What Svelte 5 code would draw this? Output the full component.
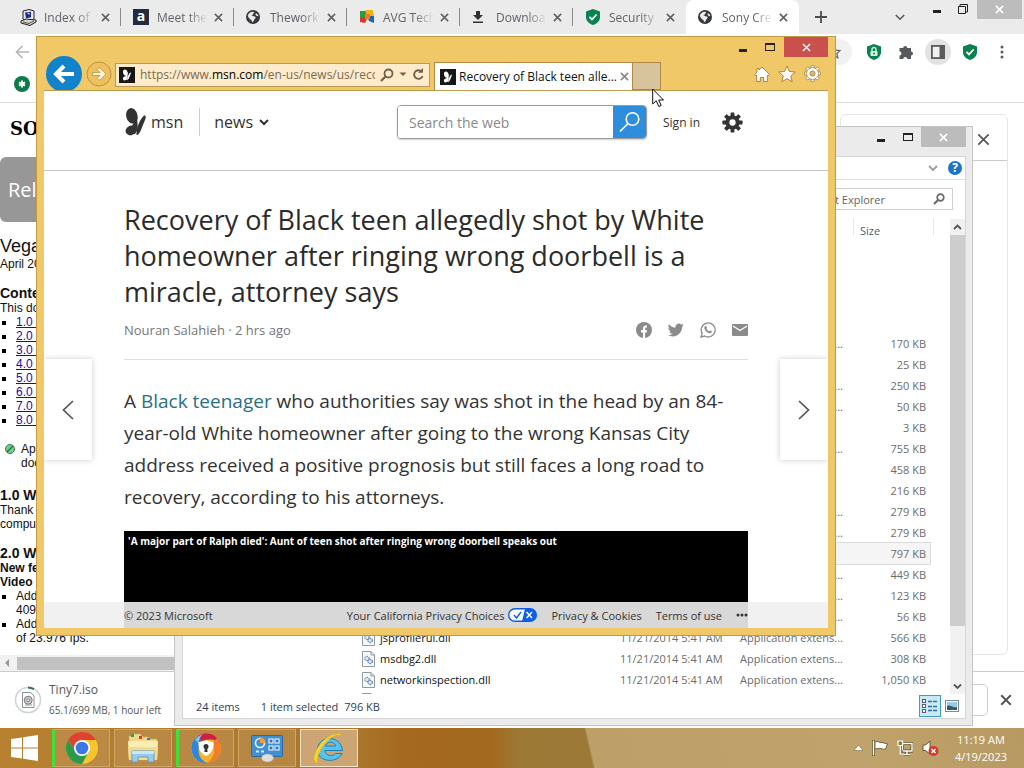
<script>
  const tabs = [
    { icon: 'server', label: 'Index of' },
    { icon: 'a', label: 'Meet the' },
    { icon: 'globe', label: 'Thework' },
    { icon: 'avg', label: 'AVG Tech' },
    { icon: 'download', label: 'Downloa' },
    { icon: 'shield', label: 'Security' },
    { icon: 'globe', label: 'Sony Cre', active: true }
  ];
  const chapters = ['1.0', '2.0', '3.0', '4.0', '5.0', '6.0', '7.0', '8.0'];
  const ext = 'Application extens...';
  const stamp = '11/21/2014 5:41 AM';
  const files = [
    { type: ext, size: '170 KB' },
    { size: '25 KB' },
    { type: ext, size: '250 KB' },
    { type: ext, size: '50 KB' },
    { size: '3 KB' },
    { type: ext, size: '755 KB' },
    { size: '458 KB' },
    { size: '216 KB' },
    { type: ext, size: '279 KB' },
    { type: ext, size: '279 KB' },
    { size: '797 KB', selected: true },
    { type: ext, size: '449 KB' },
    { type: ext, size: '123 KB' },
    { type: ext, size: '56 KB' },
    { name: 'jsprofilerui.dll', date: stamp, type: ext, size: '566 KB' },
    { name: 'msdbg2.dll', date: stamp, type: ext, size: '308 KB' },
    { name: 'networkinspection.dll', date: stamp, type: ext, size: '1,050 KB' }
  ];
</script>

{#snippet cross(s, w)}
  <svg width={s} height={s} viewBox="0 0 10 10" aria-hidden="true"><path d="M1 1 9 9M9 1 1 9" fill="none" stroke="currentColor" stroke-width={w} /></svg>
{/snippet}

{#snippet shield(s, lock)}
  <svg width={s} height={s} viewBox="0 0 16 16" aria-hidden="true">
    <path d="M8 0 15 2.400V8c0 4-3 6.800-7 8-4-1.200-7-4-7-8V2.400z" fill="#0a8150" />
    {#if lock}
      <rect x="4.500" y="7" width="7" height="5" rx="1" fill="#d8f3e4" /><path d="M6 7V5.500a2 2 0 0 1 4 0V7" fill="none" stroke="#d8f3e4" stroke-width="1.300" /><circle cx="8" cy="9.500" r="1" fill="#0a8150" />
    {:else}
      <path d="m4.500 7.800 2.500 2.600 4.600-4.900" fill="none" stroke="#fff" stroke-width="1.700" />
    {/if}
  </svg>
{/snippet}

{#snippet butterfly(color)}
  <g fill={color}>
    <ellipse cx="6.800" cy="7.800" rx="5.600" ry="7.800" transform="rotate(-12 6.800 7.800)" />
    <path d="M11.600 5c1.400 4 .4 7 .9 10.500.6 4-.2 8.500-3.200 11L6 20l2.500-5z" />
    <ellipse cx="5.800" cy="22.400" rx="5.400" ry="4.600" transform="rotate(-30 5.800 22.400)" />
    <path d="M11.500 27c-.3-7 3-15 7.500-19.500 2.300-.3 2.200 2 .6 5.500-2.300 5.200-4 11.500-6.600 13.800z" />
  </g>
{/snippet}

{#snippet msnIcon()}
  <svg width="16" height="16" viewBox="-9 -6 40 40" aria-hidden="true"><rect x="-9" y="-6" width="40" height="40" fill="#171717" />{@render butterfly('#fff')}</svg>
{/snippet}

{#snippet gear(s, color, hole, line)}
  <svg width={s} height={s} viewBox="0 0 20 20" aria-hidden="true">
    <g fill={color} stroke={line}>
      {#each [0, 45, 90, 135, 180, 225, 270, 315] as a}
        <rect x="8.200" y=".4" width="3.600" height="5" rx=".6" transform="rotate({a} 10 10)" />
      {/each}
      <circle cx="10" cy="10" r="6.800" />
    </g>
    <circle cx="10" cy="10" r="6.300" fill={color} />
    <circle cx="10" cy="10" r="3" fill={hole} stroke={line} />
  </svg>
{/snippet}

{#snippet dll()}
  <svg width="13" height="16" viewBox="0 0 13 16" aria-hidden="true"><path d="M.5.500h8.500l3.500 3.500v11.500H.5z" fill="#f7fafc" stroke="#8f9aa5" /><path d="M9 .5V4h3.500" fill="none" stroke="#8f9aa5" /><circle cx="5" cy="7.500" r="2.200" fill="#dbe8f2" stroke="#46657f" stroke-dasharray="1.500 .7" /><circle cx="8.200" cy="10.500" r="2.200" fill="#cfe2f1" stroke="#35608c" stroke-dasharray="1.500 .7" /></svg>
{/snippet}

<div class="desktop">
  <div class="workspace">
    <section class="chrome" aria-label="Web browser">
      <div class="strip">
        {#each tabs as t}
          <div class="tab" class:active={t.active}>
            <span class="fav">
              {#if t.icon === 'server'}
                <svg width="17" height="17" viewBox="0 0 17 17"><path d="M3 2 9 0.500l5 1.500v8l-5 2.500L3 10z" fill="#e8e8ee" stroke="#222" /><path d="m5 3.500 6-.8v5.500l-5 1z" fill="#1c2a8a" /><path d="m7 4 2.500-.3V6z" fill="#cfe3ff" /><path d="m1 12 5-2 10 1v2l-6 3.500L1 14z" fill="#d5d5d5" stroke="#222" /><path d="m3 13 6 1.500 5-2.500" fill="none" stroke="#555" /></svg>
              {:else if t.icon === 'a'}
                <span class="abox">a</span>
              {:else if t.icon === 'globe'}
                <svg width="14" height="14" viewBox="0 0 14 14"><circle cx="7" cy="7" r="7" fill="#343a40" /><path d="M1.800 5.500C3 2.500 5 1.600 7.600 1.700c.8.800.2 1.600-.8 2 .2 1-.6 1.700-1.700 1.800l1.700.3c.8.700 1.700.7 2.700.900.5 1.300-.6 2-1.300 2.900-.3 1.300-1 2.300-2.200 2.600L5.500 10C4 9.500 2.500 8 1.800 5.500z" fill="#ececec" /><path d="M9.700 3.200c1.500.3 2.500 1.500 2.700 3l-1.600-.3c-.9-.7-1.600-1.600-1.100-2.700z" fill="#ececec" /></svg>
              {:else if t.icon === 'avg'}
                <svg width="16" height="16" viewBox="0 0 16 16"><path d="M1 2h7v6H1z" fill="#2a9b3e" /><path d="M6 1h8l1 6H8z" fill="#f3b21b" /><path d="M8 7h7v7l-5-2z" fill="#1b66b3" /><path d="M1 8h8l-3 6-5-1z" fill="#d93b2a" /><path d="M6 5h5v5H6z" fill="#f07c1e" /></svg>
              {:else if t.icon === 'download'}
                <svg width="12" height="14" viewBox="0 0 12 14"><path d="M4 1h4v4h3L6 10 1 5h3zM1 11.500h10V13H1z" fill="#303236" /></svg>
              {:else}
                {@render shield(16, false)}
              {/if}
            </span>
            <span class="tlabel">{t.label}</span>
            <button class="plain" aria-label="Close tab">{@render cross(9, 1.800)}</button>
          </div>
        {/each}
        <button class="plain plus" aria-label="New tab"><svg width="12" height="12" viewBox="0 0 12 12"><path d="M6 0v12M0 6h12" stroke="#4b4d50" stroke-width="1.800" /></svg></button>
        <div class="chromectl">
          <button class="plain" aria-label="Search tabs"><svg width="10" height="7" viewBox="0 0 10 7"><path d="m.8 1 4.200 4.200L9.200 1" fill="none" stroke="#5a5a5a" stroke-width="1.600" /></svg></button>
          <button class="plain minb" aria-label="Minimize"><i class="dash"></i></button>
          <button class="plain resb" aria-label="Restore"><svg width="10" height="10" viewBox="0 0 10 10"><path d="M2 2V.5h7.500V8H8M.5 2.500h7v7h-7z" fill="none" stroke="#222" /></svg></button>
          <button class="plain gclose" aria-label="Close">{@render cross(9, 1.800)}</button>
        </div>
      </div>
      <div class="toolbar">
        <button class="plain" aria-label="Back"><svg width="14" height="14" viewBox="0 0 14 14"><path d="M14 7H1.500M7.500 1l-6 6 6 6" fill="none" stroke="#b5b5b5" stroke-width="1.600" /></svg></button>
        <div class="tools">
          <span class="omni"><svg width="14" height="14" viewBox="0 0 14 14"><path d="m7 1 1.800 4.100 4.300.4-3.200 2.900.9 4.400L7 10.500l-3.800 2.300.9-4.400L.9 5.500l4.300-.4z" fill="none" stroke="#6b6b6b" stroke-width="1.300" /></svg></span>
          {@render shield(16, true)}
          <svg width="16" height="16" viewBox="0 0 16 16"><path d="M1.500 4h3.700a2 2 0 1 1 4 0H13v3.600a2 2 0 1 1 0 4V15H9.300a2 2 0 0 0-4 0H1.500v-3.500a2 2 0 0 0 0-4z" fill="#57595c" /></svg>
          <span class="round"><svg width="14" height="14" viewBox="0 0 14 14"><rect x=".9" y=".9" width="12.200" height="12.200" fill="#efefef" stroke="#5b5b5b" stroke-width="1.800" /><path d="M8.500 1H13v12H8.500z" fill="#5b5b5b" /></svg></span>
          {@render shield(16, false)}
          <svg width="16" height="14" viewBox="-6 0 16 14" fill="#5b5b5b"><circle cx="2" cy="2" r="1.500" /><circle cx="2" cy="7" r="1.500" /><circle cx="2" cy="12" r="1.500" /></svg>
        </div>
      </div>
      <div class="bookmarks">
        <svg width="16" height="16" viewBox="0 0 16 16"><circle cx="8" cy="8" r="8" fill="#0d7a4a" /><path d="M8 4.500v7M5 6.300l6 3.400M11 6.300 5 9.700" stroke="#fff" stroke-width="2" /></svg>
      </div>
      <div class="page">
        <div class="doc">
          <div class="sony">SONY</div>
          <div class="banner">Rel</div>
          <div class="vegas">Vegas</div>
          <p>April 20</p>
          <h3 class="gap15">Contents</h3>
          <p>This do</p>
          <ul>
            {#each chapters as c}<li><a href="#top">{c}&nbsp;</a></li>{/each}
          </ul>
          <div class="note"><svg width="10" height="10" viewBox="0 0 10 10"><circle cx="5" cy="5" r="4.500" fill="#6fd08a" stroke="#3c7a50" /><path d="m2 8 6-6" stroke="#2f6b42" stroke-width="1.300" /></svg><p>Ap<br />doc</p></div>
          <h3 class="gap18">1.0 W</h3>
          <p>Thank<br />compu</p>
          <h3 class="gap15">2.0 W</h3>
          <p><b>New fe<br />Video</b></p>
          <ul>
            <li>Add<br />4096</li>
            <li>Add<br />of 23.976 fps.</li>
          </ul>
        </div>
        <div class="panel">
          <div class="panelhead"><button class="plain" aria-label="Close panel">{@render cross(13, 1.300)}</button></div>
        </div>
      </div>
      <div class="hscroll"><span class="larr"></span><span class="hthumb"></span></div>
      <div class="downloads">
        <svg width="28" height="28" viewBox="0 0 28 28"><circle cx="14" cy="14" r="12.500" fill="#fff" stroke="#cfd6d2" stroke-width="1.600" /><path d="M14 1.500a12.500 12.500 0 0 1 6 1.600" fill="none" stroke="#3f6f5a" stroke-width="2" /><path d="M8.500 6.500h8l3.500 3.500v11.500H8.500z" fill="#fff" stroke="#8d9297" /><path d="M11 19h7" stroke="#8d9297" /><circle cx="14.200" cy="14.200" r="4" fill="#c9cdd0" stroke="#777" /><circle cx="14.200" cy="14.200" r="1.400" fill="#fff" stroke="#777" /></svg>
        <div class="dl"><span>Tiny7.iso</span><small>65.1/699 MB, 1 hour left</small></div>
        <button class="showall" aria-label="Show all"></button>
        <button class="plain" aria-label="Close downloads">{@render cross(12, 1.600)}</button>
      </div>
    </section>

    <section class="explorer" aria-label="File explorer">
      <div class="extitle">
        <button class="plain" aria-label="Minimize"><i class="dash"></i></button>
        <button class="plain" aria-label="Maximize"><i class="box"></i></button>
        <button class="plain gclose" aria-label="Close">{@render cross(9, 1.800)}</button>
      </div>
      <div class="exbody">
        <div class="ribbon">
          <svg width="10" height="7" viewBox="0 0 10 7"><path d="m1 1 4 4 4-4" fill="none" stroke="#9a9a9a" stroke-width="1.800" /></svg>
          <span class="help">?</span>
        </div>
        <div class="exsearch"><div class="box2"><span>t Explorer</span><svg width="12" height="12" viewBox="0 0 12 12"><circle cx="7.500" cy="4.500" r="3.300" fill="none" stroke="#666" stroke-width="1.700" /><path d="M5 7 1 11" stroke="#666" stroke-width="2" /></svg></div></div>
        <div class="exmain">
          <div class="list">
            <div class="head"><span>Size</span></div>
            <table>
              <tbody>
                {#each files as f}
                  <tr class:selected={f.selected}>
                    <td class="ic">{#if f.name}{@render dll()}{/if}</td>
                    <td class="nm">{f.name ?? ''}</td>
                    <td class="dt">{f.date ?? ''}</td>
                    <td class="ty">{f.type ?? ''}</td>
                    <td class="sz">{f.size}</td>
                  </tr>
                {/each}
                <tr><td class="ic">{@render dll()}</td><td></td><td></td><td></td><td></td></tr>
              </tbody>
            </table>
          </div>
          <div class="vscroll">
            <svg width="9" height="16" viewBox="0 0 9 16"><path d="m1 10 3.500-3.500L8 10" fill="none" stroke="#555" stroke-width="1.800" /></svg>
            <span class="vthumb"></span>
            <span class="vrest"></span>
            <svg width="9" height="16" viewBox="0 0 9 16"><path d="m1 6.500 3.500 3.500L8 6.500" fill="none" stroke="#555" stroke-width="1.800" /></svg>
          </div>
        </div>
        <div class="status">
          <span>24 items</span><span class="s2">1 item selected</span><span class="s3">796 KB</span>
          <button class="view on" aria-label="Details view"><svg width="16" height="14" viewBox="0 0 16 14"><g fill="#fff" stroke="#5c5c6e"><rect x=".5" y=".5" width="3" height="3" /><rect x=".5" y="5.500" width="3" height="3" /><rect x=".5" y="10.500" width="3" height="3" /></g><path d="M6 2.500h4m1 0h4M6 7.500h4m1 0h4M6 11.500h4m1 0h4" stroke="#3c6a9c" stroke-width="1.300" /></svg></button>
          <button class="view" aria-label="Large icons view"><svg width="14" height="12" viewBox="0 0 14 12"><rect x=".5" y=".5" width="13" height="11" fill="#fff" stroke="#7b8a99" /><path d="M2 2h10v5H2z" fill="#9dc9ea" /><path d="M2 6c3-2 5 2 10 1v3H2z" fill="#2d5f62" /></svg></button>
        </div>
      </div>
    </section>

    <section class="ie" aria-label="Recovery of Black teen">
      <div class="ietitle">
        <button class="plain" aria-label="Minimize"><i class="dash"></i></button>
        <button class="plain" aria-label="Maximize"><i class="box"></i></button>
        <button class="plain redclose" aria-label="Close">{@render cross(9, 1.600)}</button>
      </div>
      <div class="iebar">
        <button class="plain back" aria-label="Back"><svg width="36" height="36" viewBox="0 0 36 36"><circle cx="18" cy="18" r="18" fill="#1283cb" /><path d="M28 18H11M18 10l-8 8 8 8" fill="none" stroke="#fff" stroke-width="4" /></svg></button>
        <button class="plain" aria-label="Forward"><svg width="26" height="26" viewBox="0 0 26 26"><circle cx="13" cy="13" r="12" fill="#edc061" stroke="#c0913a" /><path d="M6.500 11.500H14L11 8.500l1.500-1.500H14l6 6-6 6h-1.500L11 17.500l3-3H6.500z" fill="#fff3d8" stroke="#c0913a" stroke-width=".8" /></svg></button>
        <div class="addr">
          {@render msnIcon()}
          <span class="url">https://www.<b>msn.com</b>/en-us/news/us/recov</span>
          <svg width="14" height="14" viewBox="0 0 14 14"><circle cx="8.500" cy="5.500" r="4" fill="none" stroke="#6f6149" stroke-width="1.800" /><path d="M5.500 8.500 1 13" stroke="#6f6149" stroke-width="2.200" /></svg>
          <svg width="8" height="5" viewBox="0 0 8 5"><path d="M.5.500h7L4 4z" fill="#6f6149" /></svg>
          <svg width="12" height="13" viewBox="0 0 12 13"><path d="M9.500 3.500A4.300 4.300 0 1 0 10.500 8" fill="none" stroke="#6f6149" stroke-width="1.800" /><path d="M6 4.800h5V0z" fill="#6f6149" /></svg>
        </div>
        <div class="ietab">{@render msnIcon()}<span>Recovery of Black teen alle...</span><button class="plain" aria-label="Close tab">{@render cross(9, 1.800)}</button></div>
        <button class="plain ienew" aria-label="New tab"></button>
        <div class="ietools">
          <svg width="16" height="16" viewBox="0 0 16 16"><path d="M8 1 15.500 8.500 14 9.800l-.6-.6V15.500H9.700v-4H6.300v4H2.600V9.200l-.6.6L.5 8.500 3 6V2.500h2V4z" fill="#fff" stroke="#a67c38" stroke-width=".9" /></svg>
          <svg width="18" height="18" viewBox="0 0 18 18"><path d="m9 1 2.300 5.500 6 .5-4.600 3.900 1.500 5.900L9 13.600l-5.200 3.200 1.500-5.900L.7 7l6-.5z" fill="#fff" stroke="#a67c38" stroke-width=".9" /></svg>
          {@render gear(17, '#fff', '#dfbb6c', '#a67c38')}
        </div>
      </div>
      <div class="msn">
        <header>
          <a class="brand" href="#msn"><svg width="21" height="28" viewBox="0 0 21 28">{@render butterfly('#333')}</svg>msn</a>
          <button class="plain news">news<svg width="10" height="7" viewBox="0 0 10 7"><path d="m1 1 4 4 4-4" fill="none" stroke="#333" stroke-width="2" /></svg></button>
          <div class="search">
            <input type="text" placeholder="Search the web" aria-label="Search the web" />
            <button aria-label="Search"><svg width="22" height="22" viewBox="0 0 22 22"><circle cx="13.500" cy="8" r="6.300" fill="none" stroke="#fff" stroke-width="1.600" /><path d="m9 12.500-8 8" stroke="#fff" stroke-width="1.600" /></svg></button>
          </div>
          <a class="signin" href="#signin">Sign in</a>
          <button class="plain" aria-label="Settings">{@render gear(21, '#333', '#fff', 'none')}</button>
        </header>
        <article>
          <h1>Recovery of Black teen allegedly shot by White homeowner after ringing wrong doorbell is a miracle, attorney says</h1>
          <div class="byline">
            <span>Nouran Salahieh · 2 hrs ago</span>
            <div class="share">
              <svg width="16" height="16" viewBox="0 0 16 16"><circle cx="8" cy="8" r="8" fill="#8b8b8b" /><path d="M7 16v-5.500H5V8h2V6.500C7 4.300 8.300 3.300 11 3.600v2C9.500 5.500 9.100 6 9.100 7v1H11l-.4 2.500H9.100V16z" fill="#fff" /></svg>
              <svg width="16" height="16" viewBox="0 0 24 24"><path d="M23.500 4.600c-.9.400-1.800.6-2.800.8 1-.6 1.800-1.600 2.200-2.700-1 .6-2 1-3.100 1.200a4.900 4.900 0 0 0-8.400 4.500C7.300 8.200 3.700 6.200 1.300 3.200a4.900 4.900 0 0 0 1.500 6.500c-.8 0-1.600-.2-2.200-.6 0 2.300 1.600 4.400 3.900 4.900-.7.200-1.500.2-2.200.1.600 2 2.400 3.400 4.600 3.400A9.900 9.900 0 0 1-.3 19.500a14 14 0 0 0 7.500 2.200c9.100 0 14.300-7.700 14-14.600 1-.7 1.800-1.600 2.300-2.500z" fill="#8b8b8b" /></svg>
              <svg width="16" height="16" viewBox="0 0 16 16"><path d="m1 15 1.100-3.600A7 7 0 1 1 4.700 14z" fill="#fff" stroke="#8b8b8b" stroke-width="1.300" /><path d="M5 4.300c.8-.8 1.300-.2 1.900 1.500-.2.500-.6.700-.5 1 .6 1.200 1.500 2 2.700 2.500.3 0 .6-.7 1-.9l1.700.9c.3.900-.8 2-2 1.900C7 10.800 4.500 8 4.300 6c0-.7.3-1.300.7-1.700z" fill="#8b8b8b" /></svg>
              <svg width="16" height="12" viewBox="0 0 16 12"><rect width="16" height="12" rx="1" fill="#8b8b8b" /><path d="m1 2 7 4.500L15 2" fill="none" stroke="#fff" stroke-width="1.300" /></svg>
            </div>
          </div>
          <p class="lead">A <a href="#story">Black teenager</a> who authorities say was shot in the head by an 84-year-old White homeowner after going to the wrong Kansas City address received a positive prognosis but still faces a long road to recovery, according to his attorneys.</p>
          <div class="video">'A major part of Ralph died': Aunt of teen shot after ringing wrong doorbell speaks out</div>
        </article>
        <button class="pg prev" aria-label="Previous article"><svg width="12" height="20" viewBox="0 0 12 20"><path d="m11 1-9.500 9 9.500 9" fill="none" stroke="#555" stroke-width="1.700" /></svg></button>
        <button class="pg next" aria-label="Next article"><svg width="12" height="20" viewBox="0 0 12 20"><path d="m1 1 9.500 9L1 19" fill="none" stroke="#555" stroke-width="1.700" /></svg></button>
        <footer>
          <span class="copy">© 2023 Microsoft</span>
          <a href="#ca">Your California Privacy Choices <svg width="29" height="14" viewBox="0 0 29 14"><rect x=".7" y=".7" width="27.600" height="12.600" rx="6.300" fill="#fff" stroke="#0b5fe8" stroke-width="1.400" /><path d="M17 .7h5a6.300 6.300 0 0 1 0 12.600h-8z" fill="#0b5fe8" /><path d="m6 7 2.500 3 4.500-6" fill="none" stroke="#0b5fe8" stroke-width="1.400" /><path d="m18.500 4 5.500 6m0-6-5.500 6" stroke="#fff" stroke-width="1.500" /></svg></a>
          <a href="#privacy">Privacy &amp; Cookies</a>
          <a href="#terms">Terms of use</a>
          <button class="plain" aria-label="More"><svg width="12" height="4" viewBox="0 0 12 4" fill="#333"><circle cx="2" cy="2" r="1.500" /><circle cx="6" cy="2" r="1.500" /><circle cx="10" cy="2" r="1.500" /></svg></button>
        </footer>
      </div>
    </section>
    <svg class="cursor" width="13" height="20" viewBox="0 0 13 20" aria-hidden="true"><path d="M.7 1v15l3.500-3.300L6.800 18.500l2.400-1L6.700 12h4.800z" fill="#fff" stroke="#111" /></svg>
  </div>

  <nav class="taskbar" aria-label="Taskbar">
    <button class="start" aria-label="Start"><svg width="27" height="26" viewBox="0 0 27 26" fill="#fff"><path d="M0 4 11 2.500V12.500H0zM12 2.300 27 0v12.500H12zM0 13.500h11v10L0 22zM12 13.500h15V26l-15-2.300z" /></svg></button>
    <button class="app green" aria-label="Chrome"><svg width="32" height="32" viewBox="0 0 32 32"><circle cx="16" cy="16" r="16" fill="#f9c52c" /><path d="M2.140 8A16 16 0 0 1 29.860 8H16L9.500 19.500z" fill="#df4232" /><path d="M2.140 8A16 16 0 0 0 16 32l6.500-12L10 20z" fill="#2c9a4b" /><circle cx="16" cy="16" r="8" fill="#fff" /><circle cx="16" cy="16" r="6.300" fill="#3b78e7" /></svg></button>
    <button class="app" aria-label="File Explorer"><svg width="32" height="30" viewBox="0 0 32 30"><path d="M2 3h4V1h8v2h2v1h6v2h8v21H2z" fill="#f0d98a" stroke="#cfae55" stroke-width=".6" /><path d="M4 1h3v3H4z" fill="#2fa04a" /><path d="M12 3h3v3h-3z" fill="#d43c2e" /><path d="M20 5h3v2h-3z" fill="#2d7fd0" /><path d="M1 8h30l-1 19H2z" fill="#fbeeb5" /><path d="M1 14h30l-1 13H2z" fill="#f3dc92" /><path d="M5 18h22v11h-6v-5H11v5H5z" fill="#9ccbe8" stroke="#5a9cc9" /><path d="M5 18h22v3H5z" fill="#c8e6f6" /></svg></button>
    <button class="app green" aria-label="Secure browser"><svg width="32" height="32" viewBox="0 0 32 32"><circle cx="16" cy="16" r="15" fill="#f4b32b" /><path d="M8 3.500A15 15 0 0 1 30.500 12c-5-5-11-6-22-2z" fill="#cf1f45" /><path d="M27 6a15 15 0 0 1 0 20c-3 3-7 4.500-10 5 7-5 9-12 6-21z" fill="#ef7d2a" /><path d="M8 3.500A15 15 0 0 0 17 31C9 27 6 20 11 8z" fill="#2f86dc" /><path d="M5 8c2-3 4-4.500 8-6-3 3-4 5-4.500 9z" fill="#7fc4f2" /><path d="M16 8c3 1.500 5 2 7.500 2 .5 7-2 11.500-7.500 14-5.500-2.500-8-7-7.500-14 2.500 0 4.500-.5 7.500-2z" fill="#fff" /><circle cx="16" cy="14.500" r="2.500" fill="#333" /><path d="M15 15h2l.6 5h-3.200z" fill="#333" /></svg></button>
    <button class="app" aria-label="Control Panel"><svg width="32" height="30" viewBox="0 0 32 30"><rect x=".5" y="2.500" width="31" height="21" rx="1" fill="#3f8fd2" stroke="#2a6aa6" /><circle cx="9" cy="10" r="4.500" fill="#3f8fd2" stroke="#e8f3fb" stroke-width="1.600" /><path d="M9 10V4a6 6 0 0 1 5.500 6z" fill="#f29b38" /><g fill="#2e76b8" stroke="#dcecf8" stroke-width="1.200"><rect x="18" y="6" width="4" height="4" /><rect x="24" y="6" width="4" height="4" /><rect x="18" y="13" width="4" height="4" /><rect x="24" y="13" width="4" height="4" /></g><path d="M5 18.500h3m2 0h3" stroke="#dcecf8" stroke-width="2" /><ellipse cx="16.500" cy="25" rx="6" ry="4" fill="#dedede" stroke="#a9a9a9" stroke-width=".6" /></svg></button>
    <button class="app current" aria-label="Internet Explorer"><svg width="34" height="32" viewBox="0 0 34 32"><path d="M30.500 18.500H13c.5 5.500 8 6.500 10.500 3h6.500C26 31.500 5.500 31 5.500 17.500S28.500 1.500 30.500 18.500zM13.500 14h10c-.5-5-9-5-10 0z" fill="#56c3ee" stroke="#1d7fb8" /><path d="M27.500 1.500C21 1 13 6 8 12.500S-.5 28 4 30.500c1 .5 2 .3 3-.2-2.500-.8-2-5 .5-10C11 13 18 5 24 3.300c2-.6 3.500-.3 4.500.7.300-1.200 0-2.200-1-2.500z" fill="#f8d32f" stroke="#d9a91c" stroke-width=".5" /></svg></button>
    <div class="tray">
      <svg width="9" height="6" viewBox="0 0 9 6"><path d="M4.500 0 9 5.500H0z" fill="#fff" stroke="#6a542c" stroke-width=".5" /></svg>
      <svg width="16" height="16" viewBox="0 0 16 16"><path d="M1.500 0v16" stroke="#5c4820" stroke-width="3" /><path d="M3 2c3-1.500 4 1 7 .5L15.500 4l-2 5c-3 1-5-1.500-8-.5L3 9z" fill="#fff" stroke="#5c4820" stroke-width=".8" /><path d="M1.500.500v15" stroke="#fff" stroke-width="1.500" /></svg>
      <svg width="16" height="16" viewBox="0 0 16 16"><path d="M5.500 3.500h9.500v7.500H5.500zM10 11v3.500M7 14.500h6" fill="none" stroke="#5c4820" stroke-width="3" /><path d="M5.500 3.500h9.500v7.500H5.500zM10 11v3.500M7 14.500h6" fill="none" stroke="#fff" stroke-width="1.400" /><path d="M1 1h4.500v4.500H1zM3.300 5.500V14h4" fill="#8f7640" stroke="#fff" stroke-width="1.200" /></svg>
      <svg width="17" height="16" viewBox="0 0 17 16"><path d="M1 5h2.500L8 1v13L3.500 10.500H1z" fill="#fff" stroke="#5c4820" stroke-width=".9" /><circle cx="11.500" cy="11" r="5" fill="#d33a2d" /><path d="m9.500 9 4 4m0-4-4 4" stroke="#fff" stroke-width="1.500" /></svg>
      <time>11:19 AM<br />4/19/2023</time>
    </div>
  </nav>
</div>

<style>
  :global(body) { margin: 0; }
  .desktop { height: 100vh; display: flex; flex-direction: column; overflow: hidden; font-family: "Open Sans", "Noto Sans", sans-serif; font-size: 12px; color: #333; background: #fff; }
  .desktop :global(*) { box-sizing: border-box; }
  svg { display: block; flex: none; }
  button, input { font: inherit; color: inherit; }
  .plain { border: 0; background: none; padding: 0; display: flex; align-items: center; justify-content: center; flex: none; }
  a { color: inherit; text-decoration: none; }
  p, h1, h3, ul { margin: 0; padding: 0; }
  .workspace { flex: 1; position: relative; min-height: 0; }
  .dash { width: 8px; height: 3px; background: #222; }
  .box { width: 10px; height: 8px; border: 1px solid #222; border-top-width: 2px; }

  .chrome { height: 100%; display: flex; flex-direction: column; background: #fff; }
  .strip { height: 34px; background: #ebebeb; display: flex; padding-left: 8px; flex: none; }
  .tab { width: 113px; display: flex; align-items: center; padding: 0 11px 0 12px; position: relative; color: #5f6368; }
  .tab::after { content: ""; position: absolute; right: 0; top: 8px; height: 18px; border-right: 1px solid #8b8b8b; }
  .tab.active { background: #fff; border-radius: 8px 8px 0 0; }
  .tab.active::after, .tab:nth-child(6)::after { display: none; }
  .fav { width: 24px; flex: none; display: flex; }
  .abox { width: 16px; height: 16px; background: #232b3e; color: #fff; font-weight: 700; font-size: 14px; line-height: 14px; text-align: center; }
  .tlabel { flex: 1; overflow: hidden; white-space: nowrap; margin-right: 4px; mask-image: linear-gradient(90deg, #000 60%, transparent 96%); }
  .plus { margin-left: 16px; }
  .chromectl { margin-left: auto; display: flex; align-items: flex-start; }
  .chromectl > :first-child { margin: 14px 28px 0 0; }
  .minb { margin: 10px 17px 0 0; }
  .resb { margin: 4px 9px 0 0; }
  .gclose { background: #bcbcbc; color: #fff; width: 45px; height: 19px; }
  .chromectl .gclose { margin-right: 2px; }
  .toolbar { height: 35px; display: flex; align-items: center; padding: 0 14px 0 15px; flex: none; }
  .tools { margin-left: auto; display: flex; align-items: center; gap: 16px; }
  .omni { background: #f1f1f1; border-radius: 0 14px 14px 0; padding: 6px 11px 6px 0; margin-right: -2px; }
  .round { width: 26px; height: 26px; border-radius: 50%; background: #e2e2e2; display: grid; place-items: center; margin: 0 -5px; }
  .bookmarks { height: 34px; padding: 7px 14px; border-bottom: 1px solid #ddd; flex: none; }
  .page { flex: 1; min-height: 0; overflow: hidden; display: flex; justify-content: space-between; color: #111; font-family: "Liberation Sans", Arial, sans-serif; line-height: 14px; }
  .doc { width: 174px; }
  .sony { font: 700 18px/22px "DejaVu Serif", serif; padding: 15px 0 17px 10px; color: #000; }
  .banner { height: 65px; border-radius: 6px; background: #979797; color: #fff; font-family: "Open Sans", sans-serif; font-size: 20px; line-height: 65px; padding-left: 8px; }
  .vegas { font-size: 18px; line-height: 20px; margin: 14px 0 1px; }
  h3 { font-size: 14px; line-height: 15px; }
  .gap15 { margin-top: 15px; }
  .gap18 { margin-top: 18px; }
  ul { list-style: none; }
  li { padding-left: 16px; position: relative; }
  li::before { content: ""; position: absolute; left: 2px; top: 6px; width: 4px; height: 4px; background: #000; }
  li a { color: #1a0dab; text-decoration: underline; }
  .note { display: flex; gap: 6px; padding: 0 5px; margin-top: 15px; }
  .note svg { margin-top: 2px; }
  .panel { width: 168px; margin: 11px 16px 0 0; border: 1px solid #e6e6e6; border-radius: 6px; }
  .panelhead { height: 46px; border-bottom: 1px solid #ccc; display: flex; justify-content: flex-end; padding: 3px 17px 0 0; color: #555; }
  .hscroll { height: 17px; background: linear-gradient(90deg, #f1f1f1 50%, #fff 50%); border-bottom: 1px solid #ccc; display: flex; align-items: center; padding-left: 5px; gap: 8px; flex: none; }
  .larr { border: 4px solid transparent; border-right-color: #999; border-left: 0; }
  .hthumb { width: 175px; height: 13px; background: #c1c1c1; }
  .downloads { height: 56px; display: flex; align-items: center; padding: 0 12px 0 14px; flex: none; color: #555; }
  .dl { margin-left: 7px; display: flex; flex-direction: column; line-height: 20px; flex: 1; }
  .dl small { font-size: 10px; }
  .showall { width: 74px; height: 32px; border: 1px solid #ccc; border-radius: 5px; background: #fff; margin-right: 12px; }

  .explorer { position: absolute; left: 174px; right: 51px; top: 126px; bottom: 2px; background: #ebebeb; border: 1px solid #c4c4c4; display: flex; flex-direction: column; padding: 0 6px 6px 7px; font-size: 11px; }
  .extitle { height: 29px; display: flex; justify-content: flex-end; align-items: flex-start; gap: 18px; flex: none; }
  .extitle > :nth-child(1) { margin-top: 12px; }
  .extitle > :nth-child(2) { margin-top: 6px; }
  .extitle .gclose { margin-left: -10px; height: 20px; }
  .exbody { flex: 1; min-height: 0; background: #fff; border: 1px solid #d6d6d6; display: flex; flex-direction: column; }
  .ribbon { height: 23px; display: flex; align-items: center; justify-content: flex-end; gap: 10px; padding-right: 3px; border-bottom: 1px solid #ddd; flex: none; }
  .help { width: 14px; height: 14px; border-radius: 50%; background: #1c74c4; color: #fff; font-weight: 700; font-size: 12px; line-height: 14px; text-align: center; }
  .exsearch { display: flex; justify-content: flex-end; padding: 8px 12px 9px; flex: none; }
  .box2 { width: 180px; height: 22px; border: 1px solid #d0d0d0; display: flex; align-items: center; justify-content: space-between; padding: 0 7px 0 61px; color: #666; }
  .exmain { flex: 1; min-height: 0; display: flex; }
  .list { flex: 1; overflow: hidden; }
  .head { height: 23px; display: flex; justify-content: flex-end; color: #4c607a; }
  .head span { width: 81px; height: 16px; border: solid #e6e6e6; border-width: 0 1px; padding: 3px 6px; margin-right: 16px; line-height: 18px; }
  table { border-collapse: collapse; width: calc(100% - 20px); table-layout: fixed; margin-top: 91px; color: #6d6d6d; }
  tr { height: 21px; }
  td { padding: 0; white-space: nowrap; line-height: 20px; }
  .ic { width: 197px; padding-left: 179px; }
  .nm { color: #111; }
  .dt { width: 120px; }
  .ty { width: 110px; }
  .sz { width: 80px; text-align: right; padding-right: 4px; }
  .selected { background: #f5f5f5; outline: 1px solid #dcdcdc; }
  .vscroll { width: 15px; background: #f1f1f1; display: flex; flex-direction: column; align-items: center; }
  .vthumb { flex: 391; width: 100%; background: #cdcdcd; }
  .vrest { flex: 52; }
  .status { height: 24px; display: flex; align-items: center; padding: 0 2px 0 13px; color: #2b3f5c; flex: none; }
  .s2 { margin-left: 21px; }
  .s3 { margin-left: 6px; margin-right: auto; }
  .view { width: 22px; height: 22px; padding: 0; border: 1px solid transparent; background: none; display: grid; place-items: center; }
  .view.on { background: #c6ebf7; border-color: #3f9cc0; }

  .ie { position: absolute; left: 36px; right: 188px; top: 36px; bottom: 92px; background: #f0c868; border: 1px solid #c29a45; display: flex; flex-direction: column; padding: 0 7px 7px; }
  .ietitle { height: 20px; display: flex; justify-content: flex-end; gap: 18px; flex: none; }
  .ietitle .dash { margin-top: 6px; }
  .redclose { background: #c9504c; color: #fff; width: 44px; margin-left: -9px; }
  .iebar { height: 33px; display: flex; align-items: center; padding-left: 2px; color: #111; flex: none; }
  .back { margin-right: 4px; }
  .addr { width: 315px; height: 24px; border: 1px solid #bd9a50; background: #fdebcb; margin: 2px 4px 0 3px; display: flex; align-items: center; gap: 5px; padding: 0 5px 0 3px; }
  .url { flex: 1; overflow: hidden; white-space: nowrap; color: #7b6c52; }
  .url b { font-weight: 400; color: #000; }
  .ietab { width: 199px; height: 28px; align-self: flex-end; background: #fff; border: 1px solid #b08a45; border-bottom: 0; display: flex; align-items: center; gap: 3px; padding: 0 5px; white-space: nowrap; }
  .ietab span { flex: 1; }
  .ietab button { color: #888; }
  .ienew { width: 28px; height: 28px; align-self: flex-end; background: #d7c49d; border: 1px solid #b08a45; border-left: 0; }
  .ietools { margin-left: auto; display: flex; align-items: center; gap: 8px; padding-right: 7px; }

  .msn { flex: 1; min-height: 0; overflow: hidden; position: relative; background: #fff; border-top: 1px solid #bd9a50; }
  header { height: 80px; border-bottom: 1px solid #c8c8c8; padding: 14px 85px 0 81px; display: flex; align-items: flex-start; color: #333; }
  header > * { height: 34px; }
  .brand { display: flex; align-items: center; gap: 5px; font-size: 16px; }
  .news { font-size: 16px; gap: 6px; margin-left: 16px; padding-left: 15px; position: relative; }
  .news::before { content: ""; position: absolute; left: 0; top: 3px; height: 28px; border-left: 1px solid #ccc; }
  .search { width: 250px; margin-left: auto; display: flex; border: 1px solid #9a9a9a; border-radius: 4px; overflow: hidden; box-shadow: 0 1px 2px #ccc; }
  .search input { flex: 1; min-width: 0; border: 0; padding: 0 11px; font-size: 14px; outline: 0; background: #fff; }
  .search input::placeholder { color: #8a8a8a; opacity: 1; }
  .search button { width: 33px; border: 0; padding: 0; background: #2f8dde; display: grid; place-items: center; }
  .signin { margin: 0 22px 0 16px; line-height: 36px; }
  article { width: calc(100% - 160px); margin: 0 auto; }
  h1 { font-size: 27px; line-height: 36px; font-weight: 400; color: #2b2b2b; padding-top: 31px; }
  .byline { display: flex; align-items: center; justify-content: space-between; height: 50px; padding-bottom: 9px; border-bottom: 1px solid #e0e0e0; color: #767676; font-size: 13px; }
  .share { display: flex; align-items: center; gap: 16px; }
  .lead { font-size: 19px; line-height: 32px; margin-top: 25px; color: #333; }
  .lead a { color: #2a6f85; }
  .video { height: 120px; background: #000; color: #fff; font-size: 10px; font-weight: 700; line-height: 20px; margin-top: 18px; padding-left: 4px; white-space: nowrap; overflow: hidden; }
  .pg { position: absolute; top: 268px; width: 48px; height: 101px; border: 0; background: #fff; box-shadow: 0 0 6px #ccc; padding: 0; display: grid; place-items: center; }
  .prev { left: 0; }
  .next { right: 0; }
  footer { position: absolute; left: 0; right: 0; bottom: 0; height: 26px; background: rgba(240, 240, 240, 0.9); display: flex; align-items: center; gap: 14px; padding: 0 80px; font-size: 11px; }
  footer a { display: flex; gap: 4px; align-items: center; }
  .copy { margin-right: auto; }
  .cursor { position: absolute; left: 652px; top: 88px; }

  .taskbar { height: 40px; flex: none; display: flex; gap: 4px; padding: 1px 0; background: linear-gradient(77deg, transparent 0 578px, #bda069 580px, #c0a36c 850px, #b69a62), linear-gradient(90deg, #b88130, #a9762c 360px, #a5691f 400px, #a3691f 490px, #9c7a36 520px, #9c7836); }
  .start { width: 48px; border: 0; background: none; padding: 0; display: grid; place-items: center; }
  .app { width: 58px; border: 1px solid #cfa66a; background: rgba(200, 160, 110, 0.35); padding: 0; display: grid; place-items: center; }
  .green { border-left: 3px solid #3fe03c; }
  .current { background: #cda575; border-color: #f3e2c8; }
  .tray { margin-left: auto; display: flex; align-items: center; gap: 9px; padding-right: 17px; color: #fff; }
  time { font-size: 11px; line-height: 17px; text-align: center; margin-left: 7px; }
</style>
